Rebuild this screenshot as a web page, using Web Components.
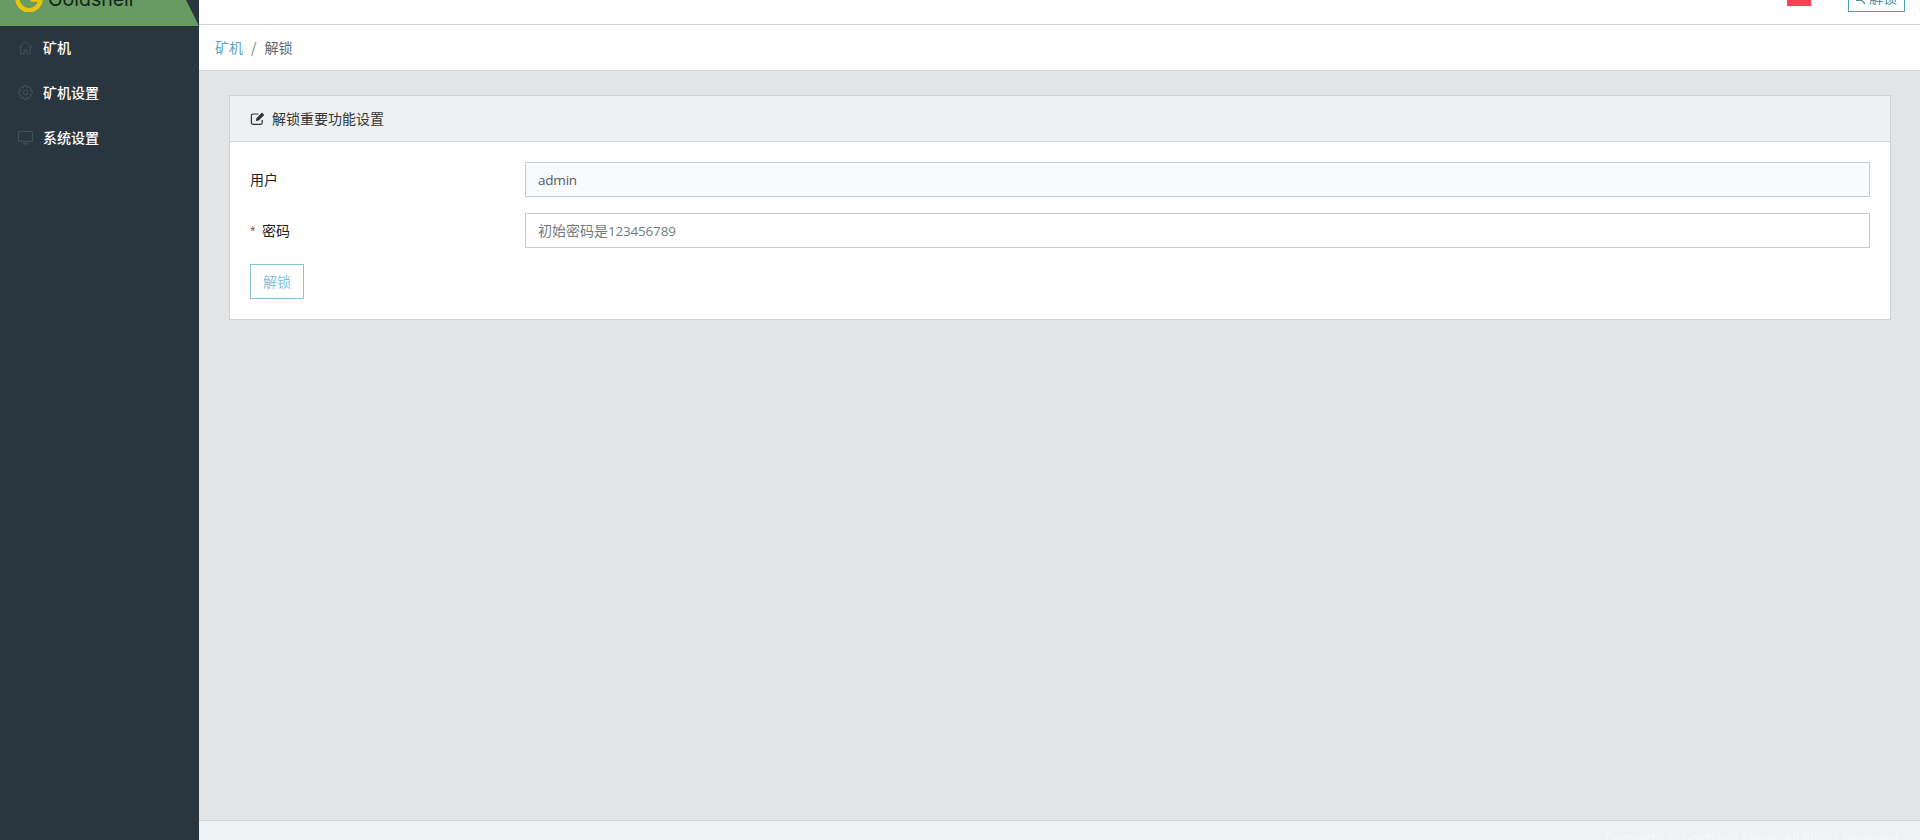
<!DOCTYPE html>
<html lang="zh"><head><meta charset="utf-8">
<style>
html,body{margin:0;height:840px;overflow:hidden;background:#e3e4e6;font-family:"Open Sans","Noto Sans CJK SC",sans-serif}
app-shell{height:840px}
</style></head><body>
<app-shell>
  <side-bar slot="side">
    <nav-item label="矿机"><svg viewBox="0 0 16 16"><path d="M.8 8.200 8 1.500l7.200 6.700M3 6.500v8.500h3.500v-4.500h3V15H13V6.500"/></svg></nav-item>
    <nav-item label="矿机设置"><svg viewBox="0 0 16 16"><circle cx="8" cy="8" r="2.400"/><path id="gear" d=""/></svg></nav-item>
    <nav-item label="系统设置"><svg viewBox="0 0 16 16"><path d="M.6 1.500h14.800v10.500H.6zM8 12v2.800M4.500 14.800h7"/></svg></nav-item>
  </side-bar>
  <top-bar slot="top"></top-bar>
  <bread-crumb slot="crumb"></bread-crumb>
  <form-card slot="main" title-text="解锁重要功能设置">
    <form-row label="用户" value="admin" readonly></form-row>
    <form-row label="密码" required placeholder="初始密码是123456789"></form-row>
    <outline-button>解锁</outline-button>
  </form-card>
  <page-footer slot="foot"></page-footer>
</app-shell>
<script>
(function(){let d='';const n=8;for(let i=0;i<n;i++){const a=i*2*Math.PI/n;
 [[-.38,5.4],[-.2,7.4],[.2,7.4],[.38,5.4]].forEach(([o,r],j)=>{d+=((i||j)?'L':'M')+(8+r*Math.cos(a+o)).toFixed(2)+' '+(8+r*Math.sin(a+o)).toFixed(2)});}
 document.getElementById('gear').setAttribute('d',d+'Z');})();
function def(name,html){
  customElements.define(name,class extends HTMLElement{
    constructor(){super();this.attachShadow({mode:'open'}).innerHTML=typeof html==='function'?html(this):html;}
  });
}
def('app-shell',`<style>
:host{display:grid;grid-template-columns:199px 1fr;grid-template-rows:25px 46px 1fr 20px;width:1920px}
.s{grid-row:1/5;display:flex;flex-direction:column;min-height:0}
::slotted([slot=main]){margin:24px 29px 0 30px}
</style>
<div class="s"><slot name="side"></slot></div>
<slot name="top"></slot><slot name="crumb"></slot><slot name="main"></slot><slot name="foot"></slot>`);

def('side-bar',`<style>
:host{display:flex;flex-direction:column;flex:1;background:#2a363f;color:#fff}
.logo{height:26px;background:#689a63;clip-path:polygon(0 0,186px 0,199px 26px,0 26px);overflow:hidden}
.in{display:flex;align-items:center;gap:5px;padding-left:15px;height:28px;margin-top:-16px}
svg{width:28px;height:28px;flex:none}
.t{font:19.500px/1 "Inter",sans-serif;color:#15231a;padding-top:4px}
.list{display:flex;flex-direction:column;margin-top:-1px}
</style>
<div class="logo"><div class="in"><svg viewBox="0 0 28 28"><path d="M23 15.500H15.500M25.500 15.500A11.500 11.500 0 0 1 2.500 14" fill="none" stroke="#e8c40c" stroke-width="4.500"/></svg><span class="t">Goldshell</span></div></div>
<div class="list"><slot></slot></div>`);

def('nav-item',el=>`<style>
:host{display:flex;align-items:center;height:45px;padding-left:18px;gap:10px;font-size:14px;color:#fff;box-sizing:border-box}
.i{display:flex;width:15px;height:15px}
::slotted(svg){width:15px;height:15px;fill:none;stroke:#46555f;stroke-width:1}
span{font-family:"Noto Sans CJK SC",sans-serif;font-weight:500;line-height:1;position:relative;top:-1px}
</style><div class="i"><slot></slot></div><span>${el.getAttribute('label')}</span>`);

def('top-bar',`<style>
:host{display:flex;justify-content:flex-end;align-items:flex-start;background:#fff;border-bottom:1px solid #cfd1d2;box-sizing:border-box;height:25px;overflow:hidden;padding-right:15px}
.flag{width:24px;height:6px;background:#fc3f52;margin-right:37px}
.b{height:12px;width:57px;box-sizing:border-box;border:1px solid #4f9fa8;border-top:0;display:flex;align-items:flex-end;justify-content:center;gap:3px;overflow:hidden;color:#4a8ca8;font:14px/1 "Noto Sans CJK SC",sans-serif;white-space:nowrap}
.b span{position:relative;top:-7px}
.b svg{width:10px;height:14px;flex:none;position:relative;top:-7px;fill:none;stroke:#4a8ca8;stroke-width:1.200}
</style><div class="flag"></div><div class="b"><svg viewBox="0 0 10 14"><path d="M0 10.500h6L9 14"/></svg><span>解锁</span></div>`);

def('bread-crumb',`<style>
:host{display:flex;align-items:center;background:#fff;border-bottom:1px solid #cfd1d2;box-sizing:border-box;height:46px;padding:0 0 2px 16px;font:14px "Noto Sans CJK SC",sans-serif;color:#5d676d}
a{color:#5ba3c0}i{font-style:normal;margin:0 8px;color:#777}
</style><a>矿机</a><i>/</i><span>解锁</span>`);

def('form-card',el=>`<style>
:host{display:flex;flex-direction:column;height:225px;background:#fff;border:1px solid #cdd2d6;box-sizing:border-box}
header{height:46px;box-sizing:border-box;background:#eef1f4;border-bottom:1px solid #cdd2d6;display:flex;align-items:center;gap:7px;padding-left:20px;font:14px "Noto Sans CJK SC",sans-serif;color:#333}
header span{position:relative;top:-1px}
svg{width:15px;height:15px;fill:none;stroke:#333;stroke-width:1.300}
.b{padding:20px 20px 0 20px;display:flex;flex-direction:column;gap:16px;align-items:stretch}
::slotted(outline-button){align-self:flex-start}
</style><header><svg viewBox="0 0 16 16"><path d="M13 9.500v3A1.800 1.800 0 0 1 11.200 14.300H3.300A1.800 1.800 0 0 1 1.500 12.500V5A1.800 1.800 0 0 1 3.300 3.200H9"/><path d="M6.300 10.700l.5-3 6-6 2.500 2.500-6 6z" fill="#333" stroke="none"/></svg><span>${el.getAttribute('title-text')}</span></header><div class="b"><slot></slot></div>`);

def('form-row',el=>{
 const v=el.getAttribute('value')||'',ro=el.hasAttribute('readonly'),req=el.hasAttribute('required');
 return `<style>
:host{display:grid;grid-template-columns:275px 1fr;align-items:center;height:35px;font:14px "Noto Sans CJK SC",sans-serif;color:#222}
label{display:flex;align-items:center;position:relative;top:-1px}
.req{color:#8a3a3a;width:12px;font:10px/1 "Open Sans",sans-serif}
.f{height:35px;box-sizing:border-box;border:1px solid #c9cccf;background:${ro?'#f8fbfd':'#fff'};display:flex;align-items:center;padding-left:12px;color:${ro?'#555c62':'#757b80'};font:13.500px "Open Sans","Noto Sans CJK SC",sans-serif;letter-spacing:-.2px}
.z{font-size:14px;letter-spacing:0;position:relative;top:-1px}
</style><label>${req?'<span class="req">*</span>':''}${el.getAttribute('label')}</label><div class="f">${v||('<span class="z">初始密码是</span>123456789')}</div>`});

def('outline-button',`<style>
:host{display:flex;width:54px;height:35px;box-sizing:border-box;border:1px solid #86c5d0;align-items:center;justify-content:center;font:14px/1 "Noto Sans CJK SC",sans-serif;color:#7fc3dc;background:#fff;padding-bottom:2px}
</style><slot></slot>`);

def('page-footer',`<style>
:host{display:flex;justify-content:flex-end;background:#eff2f5;border-top:1px solid #cdd2d6;box-sizing:border-box;height:20px;padding:10px 18px 0 0;font:13px/1 "Open Sans",sans-serif;color:#f6f8fa;overflow:hidden;white-space:nowrap}
</style>Copyright © Goldshell Miner. All Rights Reserved.`);
</script>
</body></html>
